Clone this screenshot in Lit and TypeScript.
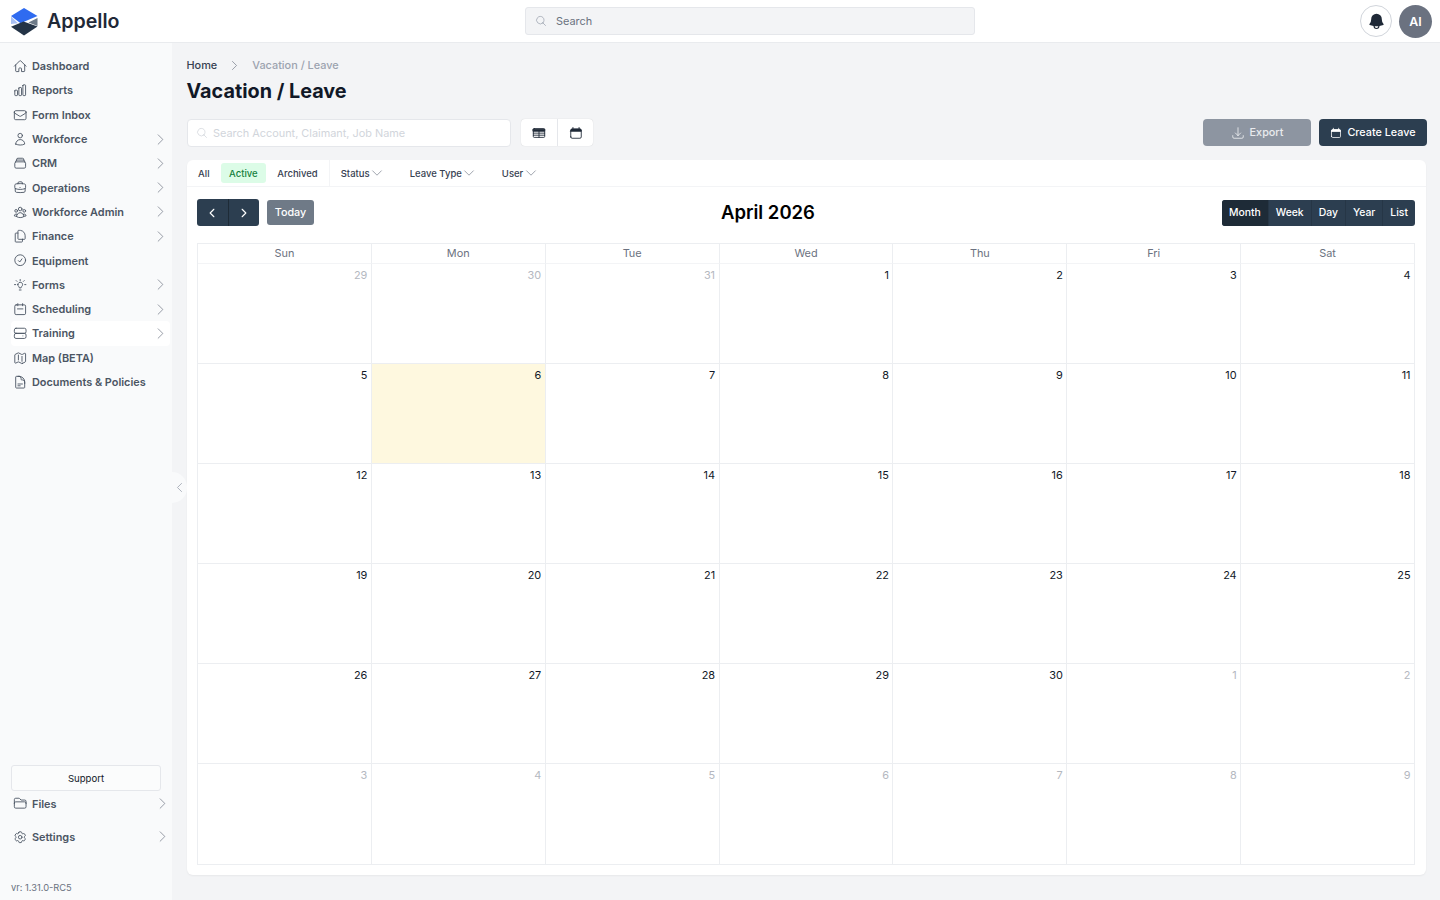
import { LitElement, css, html, svg } from 'lit';
import { customElement } from 'lit/decorators.js';

const icon = (d: unknown, cls = 'ic') => html`<svg class=${cls} viewBox="0 0 24 24" fill="none" stroke="currentColor" stroke-width="1.5" stroke-linecap="round" stroke-linejoin="round">${d}</svg>`;

const chevR = svg`<path d="M8.25 4.5l7.5 7.5-7.5 7.5"/>`;
const chevL = svg`<path d="M15.75 19.5L8.25 12l7.5-7.5"/>`;
const chevD = svg`<path d="M19.5 8.25l-7.5 7.5-7.5-7.5"/>`;
const search = svg`<path d="M21 21l-5.2-5.2m0 0A7.5 7.5 0 1 0 5.2 5.2a7.5 7.5 0 0 0 10.6 10.6z"/>`;
// calendar with a filled head bar, used on the view switch and create button
const calendar = svg`<path d="M6.75 2.5v3M17.25 2.5v3M3 18.75V7.5a2.25 2.25 0 0 1 2.25-2.25h13.5A2.25 2.25 0 0 1 21 7.5v11.25A2.25 2.25 0 0 1 18.75 21H5.25A2.25 2.25 0 0 1 3 18.75z"/><path d="M3 7.5a2.25 2.25 0 0 1 2.25-2.25h13.5A2.25 2.25 0 0 1 21 7.500v1.500H3z" fill="currentColor"/>`;
const table = svg`<path d="M3.750 4.500h16.500a1.500 1.500 0 0 1 1.500 1.500v12a1.500 1.500 0 0 1-1.500 1.500H3.750a1.500 1.500 0 0 1-1.500-1.500V6a1.500 1.500 0 0 1 1.500-1.500z"/><path d="M2.250 5.500h19.500v3.500H2.250z" fill="currentColor"/><path d="M2.250 12.250h19.500M2.250 15.750h19.500M12 9v10.500"/>`;

const navIcons: Record<string, unknown> = {
  home: svg`<path d="M2.25 12l8.95-8.95a1.125 1.125 0 0 1 1.6 0L21.75 12M4.5 9.75v10.125c0 .621.504 1.125 1.125 1.125H9.75v-4.875c0-.621.504-1.125 1.125-1.125h2.25c.621 0 1.125.504 1.125 1.125V21h4.125c.621 0 1.125-.504 1.125-1.125V9.75"/>`,
  chart: svg`<path d="M3 13.125C3 12.504 3.504 12 4.125 12h2.25c.621 0 1.125.504 1.125 1.125v6.75C7.5 20.496 6.996 21 6.375 21h-2.25A1.125 1.125 0 0 1 3 19.875v-6.75zM9.75 8.625c0-.621.504-1.125 1.125-1.125h2.25c.621 0 1.125.504 1.125 1.125v11.25c0 .621-.504 1.125-1.125 1.125h-2.25a1.125 1.125 0 0 1-1.125-1.125V8.625zM16.5 4.125c0-.621.504-1.125 1.125-1.125h2.25C20.496 3 21 3.504 21 4.125v15.75c0 .621-.504 1.125-1.125 1.125h-2.25a1.125 1.125 0 0 1-1.125-1.125V4.125z"/>`,
  mail: svg`<path d="M21.75 6.75v10.5a2.25 2.25 0 0 1-2.25 2.25h-15a2.25 2.25 0 0 1-2.25-2.25V6.75m19.5 0A2.25 2.25 0 0 0 19.5 4.5h-15a2.25 2.25 0 0 0-2.25 2.25m19.5 0v.243a2.25 2.25 0 0 1-1.07 1.916l-7.5 4.615a2.25 2.25 0 0 1-2.36 0L3.32 8.91a2.25 2.25 0 0 1-1.07-1.916V6.75"/>`,
  user: svg`<path d="M15.75 6a3.75 3.75 0 1 1-7.5 0 3.75 3.75 0 0 1 7.5 0zM4.5 20.118a7.5 7.5 0 0 1 15 0A17.93 17.93 0 0 1 12 21.75c-2.676 0-5.216-.584-7.5-1.632z"/>`,
  stack: svg`<path d="M6 6.878V6a2.25 2.25 0 0 1 2.25-2.25h7.5A2.25 2.25 0 0 1 18 6v.878m-12 0c.235-.083.487-.128.75-.128h10.5c.263 0 .515.045.75.128m-12 0A2.25 2.25 0 0 0 4.5 9v.878m13.5-3A2.25 2.25 0 0 1 19.5 9v.878m0 0a2.246 2.246 0 0 0-.75-.128H5.25c-.263 0-.515.045-.75.128m15 0A2.25 2.25 0 0 1 21 12v6a2.25 2.25 0 0 1-2.25 2.25H5.25A2.25 2.25 0 0 1 3 18v-6c0-.98.626-1.813 1.5-2.122"/>`,
  briefcase: svg`<path d="M20.25 14.15v4.25c0 1.094-.787 2.036-1.872 2.18-2.087.277-4.216.42-6.378.42s-4.291-.143-6.378-.42c-1.085-.144-1.872-1.086-1.872-2.18v-4.25m16.5 0a2.18 2.18 0 0 0 .75-1.661V8.706c0-1.081-.768-2.015-1.837-2.175a48.114 48.114 0 0 0-3.413-.387m4.5 8.006c-.194.165-.42.295-.673.38A23.978 23.978 0 0 1 12 15.75c-2.648 0-5.195-.429-7.577-1.22a2.016 2.016 0 0 1-.673-.38m0 0A2.18 2.18 0 0 1 3 12.489V8.706c0-1.081.768-2.015 1.837-2.175a48.111 48.111 0 0 1 3.413-.387m7.5 0V5.25A2.25 2.25 0 0 0 13.5 3h-3a2.25 2.25 0 0 0-2.25 2.25v.894m7.5 0a48.667 48.667 0 0 0-7.5 0M12 12.75h.008v.008H12v-.008z"/>`,
  group: svg`<path d="M18 18.72a9.094 9.094 0 0 0 3.741-.479 3 3 0 0 0-4.682-2.72m.94 3.198l.001.031c0 .225-.012.447-.037.666A11.944 11.944 0 0 1 12 21c-2.17 0-4.207-.576-5.963-1.584A6.062 6.062 0 0 1 6 18.719m12 0a5.971 5.971 0 0 0-.941-3.197m0 0A5.995 5.995 0 0 0 12 12.75a5.995 5.995 0 0 0-5.058 2.772m0 0a3 3 0 0 0-4.681 2.72 8.986 8.986 0 0 0 3.74.477m.94-3.197a5.971 5.971 0 0 0-.94 3.197M15 6.75a3 3 0 1 1-6 0 3 3 0 0 1 6 0zm6 3a2.25 2.25 0 1 1-4.5 0 2.25 2.25 0 0 1 4.5 0zm-13.5 0a2.25 2.25 0 1 1-4.5 0 2.25 2.25 0 0 1 4.5 0z"/>`,
  copy: svg`<path d="M15.75 17.25v3.375c0 .621-.504 1.125-1.125 1.125h-9.75a1.125 1.125 0 0 1-1.125-1.125V7.875c0-.621.504-1.125 1.125-1.125H6.750a9.06 9.06 0 0 1 1.500.124m7.500 10.376h3.375c.621 0 1.125-.504 1.125-1.125V11.250c0-4.460-3.243-8.161-7.500-8.876a9.06 9.06 0 0 0-1.500-.124H9.375c-.621 0-1.125.504-1.125 1.125v12.750c0 .621.504 1.125 1.125 1.125h6.375z"/>`,
  check: svg`<path d="M9 12.75L11.25 15 15 9.75M21 12a9 9 0 1 1-18 0 9 9 0 0 1 18 0z"/>`,
  bulb: svg`<path d="M12 2.500v2M4.500 11H2.500m19 0h-2M6.700 5.700L5.300 4.300m12 1.400l1.400-1.400M8 11a4 4 0 1 1 6.500 3.100c-.700.600-1 1.300-1 2.400h-3c0-1.100-.300-1.800-1-2.400A4 4 0 0 1 8 11zM10.500 20h3"/>`,
  sched: svg`<path d="M8 2.750v3.500M16 2.750v3.500M5.25 4.750h13.5A2.25 2.25 0 0 1 21 7v11.75A2.25 2.25 0 0 1 18.75 21H5.25A2.25 2.25 0 0 1 3 18.75V7a2.25 2.25 0 0 1 2.25-2.25zM7.5 11.5h9"/>`,
  tray: svg`<path d="M5 3.75h14A2.75 2.75 0 0 1 21.75 6.5v3A2.75 2.75 0 0 1 19 12.25H5A2.75 2.75 0 0 1 2.25 9.5v-3A2.75 2.75 0 0 1 5 3.75zM5 12.25h14a2.75 2.75 0 0 1 2.75 2.75v3A2.75 2.75 0 0 1 19 20.75H5A2.75 2.75 0 0 1 2.25 18v-3A2.75 2.75 0 0 1 5 12.25zM16.5 16.5h.01"/>`,
  map: svg`<path d="M9 6.75V15m6-6v8.25m.503 3.498l4.875-2.437c.381-.19.622-.58.622-1.006V4.82c0-.836-.88-1.38-1.628-1.006l-3.869 1.934c-.317.159-.69.159-1.006 0L9.503 3.252a1.125 1.125 0 0 0-1.006 0L3.622 5.689C3.24 5.88 3 6.27 3 6.695V19.18c0 .836.88 1.38 1.628 1.006l3.869-1.934c.317-.159.69-.159 1.006 0l4.994 2.497c.317.158.69.158 1.006 0z"/>`,
  doc: svg`<path d="M19.5 14.25v-2.625a3.375 3.375 0 0 0-3.375-3.375h-1.5A1.125 1.125 0 0 1 13.5 7.125v-1.5a3.375 3.375 0 0 0-3.375-3.375H8.25m0 12.75h7.5m-7.5 3H12M10.5 2.25H5.625c-.621 0-1.125.504-1.125 1.125v17.25c0 .621.504 1.125 1.125 1.125h12.75c.621 0 1.125-.504 1.125-1.125V11.25a9 9 0 0 0-9-9z"/>`,
  folder: svg`<path d="M2.25 12.75V12A2.25 2.25 0 0 1 4.5 9.75h15A2.25 2.25 0 0 1 21.75 12v.75m-8.69-6.44l-2.12-2.12a1.5 1.5 0 0 0-1.061-.44H4.5A2.25 2.25 0 0 0 2.25 6v12a2.25 2.25 0 0 0 2.25 2.25h15A2.25 2.25 0 0 0 21.75 18V9a2.25 2.25 0 0 0-2.25-2.25h-5.379a1.5 1.5 0 0 1-1.06-.44z"/>`,
  gear: svg`<path d="M9.594 3.94c.09-.542.56-.94 1.11-.94h2.593c.55 0 1.02.398 1.11.94l.213 1.281c.063.374.313.686.645.87.074.04.147.083.22.127.324.196.72.257 1.075.124l1.217-.456a1.125 1.125 0 0 1 1.37.49l1.296 2.247a1.125 1.125 0 0 1-.26 1.431l-1.003.827c-.293.24-.438.613-.431.992a6.759 6.759 0 0 1 0 .255c-.007.378.138.75.43.99l1.005.828c.424.35.534.954.26 1.43l-1.298 2.247a1.125 1.125 0 0 1-1.369.491l-1.217-.456c-.355-.133-.75-.072-1.076.124a6.57 6.57 0 0 1-.22.128c-.331.183-.581.495-.644.869l-.213 1.28c-.09.543-.56.941-1.11.941h-2.594c-.55 0-1.02-.398-1.11-.94l-.213-1.281c-.062-.374-.312-.686-.644-.87a6.52 6.52 0 0 1-.22-.127c-.325-.196-.72-.257-1.076-.124l-1.217.456a1.125 1.125 0 0 1-1.369-.49l-1.297-2.247a1.125 1.125 0 0 1 .26-1.431l1.004-.827c.292-.24.437-.613.43-.992a6.932 6.932 0 0 1 0-.255c.007-.378-.138-.75-.43-.99l-1.004-.828a1.125 1.125 0 0 1-.26-1.43l1.297-2.247a1.125 1.125 0 0 1 1.37-.491l1.216.456c.356.133.751.072 1.076-.124.072-.044.146-.087.22-.128.332-.183.582-.495.644-.869l.214-1.281zM15 12a3 3 0 1 1-6 0 3 3 0 0 1 6 0z"/>`,
};

const navItems = [
  { label: 'Dashboard', icon: 'home' },
  { label: 'Reports', icon: 'chart' },
  { label: 'Form Inbox', icon: 'mail' },
  { label: 'Workforce', icon: 'user', more: true },
  { label: 'CRM', icon: 'stack', more: true },
  { label: 'Operations', icon: 'briefcase', more: true },
  { label: 'Workforce Admin', icon: 'group', more: true },
  { label: 'Finance', icon: 'copy', more: true },
  { label: 'Equipment', icon: 'check' },
  { label: 'Forms', icon: 'bulb', more: true },
  { label: 'Scheduling', icon: 'sched', more: true },
  { label: 'Training', icon: 'tray', more: true, active: true },
  { label: 'Map (BETA)', icon: 'map' },
  { label: 'Documents & Policies', icon: 'doc' },
];

// april 2026 grid, six weeks from sunday 29 march
const days: { n: number; off?: boolean; now?: boolean }[] = [
  { n: 29, off: true }, { n: 30, off: true }, { n: 31, off: true },
  ...Array.from({ length: 30 }, (_, i) => ({ n: i + 1, now: i + 1 === 6 })),
  ...Array.from({ length: 9 }, (_, i) => ({ n: i + 1, off: true })),
];

@customElement('app-root')
export class AppRoot extends LitElement {
  static styles = css`
    :host {
      display: grid;
      grid-template-columns: 172px 1fr;
      grid-template-rows: 43px 1fr;
      height: 100vh;
      overflow: hidden;
      background: #f3f4f6;
      font-family: Inter, "Liberation Sans", sans-serif;
      color: #111827;
    }
    svg { display: block; flex: none; }
    .ic { width: 14.4px; height: 14.4px; }

    header {
      grid-column: 1 / 3;
      display: grid;
      grid-template-columns: 515px 450px 1fr;
      align-items: center;
      background: #fff;
      border-bottom: 1px solid #e9ebee;
      box-sizing: border-box;
      padding: 0 8px 0 10px;
    }
    .brand { display: flex; align-items: center; gap: 9px; font-size: 19.6px; font-weight: 600; color: #1f2937; }
    .top-search {
      display: flex;
      align-items: center;
      gap: 9px;
      height: 28px;
      box-sizing: border-box;
      padding: 0 9px;
      background: #f3f4f6;
      border: 1px solid #e5e7eb;
      border-radius: 3px;
      font-size: 10.9px;
      color: #6b7280;
    }
    .top-search .ic { width: 12px; height: 12px; color: #9ca3af; }
    .top-right { display: flex; justify-content: flex-end; align-items: center; gap: 7px; }
    .bell {
      width: 32px;
      height: 32px;
      box-sizing: border-box;
      border: 1px solid #d1d5db;
      border-radius: 50%;
      display: grid;
      place-items: center;
      color: #1f2937;
    }
    .avatar {
      width: 33px;
      height: 33px;
      margin-top: 1px;
      border-radius: 50%;
      background: #6b7280;
      color: #fff;
      display: grid;
      place-items: center;
      font-size: 12.4px;
      font-weight: 600;
    }

    aside {
      display: flex;
      flex-direction: column;
      background: #f9fafb;
      padding: 11px 2px 0 11px;
      min-height: 0;
    }
    .item {
      display: flex;
      align-items: center;
      height: 24.3px;
      flex: none;
      padding: 0 2px 0 2px;
      gap: 4.6px;
      border-radius: 4px;
      font-size: 10.9px;
      font-weight: 600;
      color: #4b5563;
    }
    .item.active { background: #fff; }
    .item span { flex: 1; }
    .item .chev { width: 15px; height: 15px; color: #6b7280; stroke-width: 1.1; }
    .support {
      margin: auto 9px 0 0;
      height: 26px;
      flex: none;
      box-sizing: border-box;
      border: 1.5px solid #e5e7eb;
      border-radius: 3px;
      background: #fbfcfc;
      display: grid;
      place-items: center;
      font-size: 9.6px;
      font-weight: 400;
      color: #111827;
    }
    .foot { padding-right: 0; }
    .settings { margin-top: 9px; }
    .version { margin: 33px 0 7px; font-size: 9.3px; line-height: 11px; color: #6b7280; }

    .collapse {
      position: absolute;
      left: 172px;
      top: 472px;
      width: 15px;
      height: 31px;
      background: #f9fafb;
      border-radius: 0 15px 15px 0;
      display: grid;
      place-items: center;
      color: #9ca3af;
    }
    .collapse .ic { width: 13px; height: 13px; }

    main { padding: 15px 14px 25px 15px; min-width: 0; min-height: 0; display: flex; flex-direction: column; }
    .crumbs { display: flex; align-items: center; gap: 11px; font-size: 10.9px; font-weight: 500; color: #374151; height: 14px; margin-left: -0.5px; }
    .crumbs .ic { width: 13px; height: 13px; color: #6b7280; stroke-width: 1.2; }
    .crumbs .cur { color: #9ca3af; }
    h1 { margin: 4px 0 0 -0.5px; font-size: 19.8px; line-height: 30px; font-weight: 700; color: #111827; }

    .actions { display: flex; align-items: flex-start; margin: 13px -1px 0 0; height: 28px; }
    .find {
      width: 324px;
      height: 28px;
      box-sizing: border-box;
      display: flex;
      align-items: center;
      gap: 5px;
      padding: 0 8px;
      background: #fff;
      border: 1px solid #e5e7eb;
      border-radius: 4px;
      font-size: 10.9px;
      color: #d1d5db;
    }
    .find .ic { width: 12px; height: 12px; }
    .views { display: flex; margin-left: 10px; height: 27px; background: #fff; border-radius: 4px; box-shadow: 0 0 1px rgba(0,0,0,.2); }
    .views div { width: 36px; box-sizing: border-box; display: grid; place-items: center; color: #1f2937; }
    .views div + div { border-left: 1px solid #e5e7eb; }
    .views .ic { width: 14px; height: 14px; }
    .btn {
      height: 27px;
      box-sizing: border-box;
      display: flex;
      align-items: center;
      justify-content: center;
      gap: 5px;
      border-radius: 4px;
      color: #fff;
      font-size: 10.8px;
      font-weight: 500;
    }
    .btn .ic { width: 12px; height: 12px; }
    .export { width: 108px; margin-left: auto; background: #8d95a1; color: #e9ebee; }
    .export .ic { width: 14px; height: 14px; }
    .create { width: 108px; margin-left: 8px; background: #2c3e50; }

    .card {
      margin-top: 13px;
      flex: 1;
      min-height: 0;
      background: #fff;
      border-radius: 6px;
      box-shadow: 0 1px 2px rgba(0,0,0,.05);
      display: flex;
      flex-direction: column;
    }
    .filters { display: flex; align-items: center; height: 27px; flex: none; border-bottom: 1px solid #f3f4f6; box-sizing: border-box; font-size: 9.5px; color: #374151; font-weight: 500; }
    .tabs { display: flex; align-items: center; height: 100%; padding: 0 3.5px 0 3px; gap: 3.5px; border-right: 1px solid #f3f4f6; }
    .tab { padding: 0 8px; height: 20px; line-height: 21px; border-radius: 3px; }
    .tab.on { background: #dcfce7; color: #15803d; }
    .drop { display: flex; align-items: center; gap: 0.5px; margin-left: 25.5px; }
    .tabs + .drop { margin-left: 10.5px; }
    .drop .ic { width: 14px; height: 14px; color: #6b7280; stroke-width: 1.1; }

    .cal { flex: 1; padding: 12px 11px 10px 10px; min-height: 0; display: flex; flex-direction: column; }
    .bar { display: flex; justify-content: space-between; align-items: center; height: 27px; }
    .bar-left { display: flex; gap: 8px; align-items: center; }
    .pager { display: flex; height: 27px; width: 62px; background: #2c3e50; border-radius: 3px; color: #fff; }
    .pager div { flex: 1; display: grid; place-items: center; }
    .pager div + div { border-left: 1px solid #1e2b37; }
    .pager .ic { stroke-width: 2.2; width: 12px; height: 12px; }
    .today-btn { height: 25px; width: 47px; display: grid; place-items: center; background: #6f7a87; color: #fff; border-radius: 3px; font-size: 10.8px; font-weight: 500; }
    h2 { margin: -1px 0 1px; font-size: 18.5px; font-weight: 600; color: #000; }
    .modes { display: flex; height: 26px; background: #2c3e50; border-radius: 3px; overflow: hidden; color: #fff; font-size: 10.4px; font-weight: 500; }
    .modes div { display: grid; place-items: center; padding: 0 7px; border-left: 1px solid #263646; }
    .modes div:first-child { background: #1e2b37; border-left: 0; }

    .grid {
      margin-top: 17px;
      flex: 1;
      min-height: 0;
      display: grid;
      grid-template-columns: repeat(7, 1fr);
      grid-template-rows: 20px repeat(6, 1fr);
      border: 1px solid #eceef1;
      border-width: 1px 0 1px 1px;
      box-sizing: border-box;
    }
    .head, .day { border-right: 1px solid #eceef1; box-sizing: border-box; }
    .head { display: grid; place-items: center; padding-bottom: 1px; font-size: 10.9px; color: #6b7280; border-bottom: 1px solid #f3f4f6; }
    .day { border-bottom: 1px solid #eceef1; padding: 4px 3.5px; text-align: right; font-size: 10.9px; line-height: 14px; color: #111827; }
    .day:nth-last-child(-n + 7) { border-bottom: 0; }
    .day.off { color: #b4b8bf; }
    .day.now { background: #fef8df; }
  `;

  render() {
    return html`
      <header>
        <div class="brand">
          <svg width="28" height="31" viewBox="10 5 28 31">
            <path d="M24 7L37.500 15 20.500 22.200 11 15z" fill="#2f6bf0"/>
            <path d="M11 15.500V23L18 22.300z" fill="#a9c1f5"/>
            <path d="M23.500 20.500L37.500 25.500 24 34.500 11 25.800z" fill="#243447"/>
            <path d="M37.500 17V25L28.500 21.400z" fill="#6d7a88"/>
          </svg>
          Appello
        </div>
        <div class="top-search">${icon(search)}Search</div>
        <div class="top-right">
          <div class="bell">
            <svg width="19" height="19" viewBox="0 0 24 24" fill="currentColor"><path d="M12 2.250A6.750 6.750 0 0 0 5.250 9v.750a8.200 8.200 0 0 1-2.100 5.500.750.750 0 0 0 .300 1.200c1.500.550 3.100.950 4.750 1.200a3.750 3.750 0 1 0 7.600 0c1.650-.250 3.250-.650 4.750-1.200a.750.750 0 0 0 .300-1.200 8.200 8.200 0 0 1-2.100-5.500V9A6.750 6.750 0 0 0 12 2.250zM12 20.250a2.250 2.250 0 0 1-2.250-2.200 28 28 0 0 0 4.500 0A2.250 2.250 0 0 1 12 20.250z"/></svg>
          </div>
          <div class="avatar">AI</div>
        </div>
      </header>

      <aside>
        ${navItems.map(n => html`
          <div class="item ${n.active ? 'active' : ''}">
            ${icon(navIcons[n.icon])}
            <span>${n.label}</span>
            ${n.more ? icon(chevR, 'ic chev') : ''}
          </div>
        `)}
        <div class="support">Support</div>
        <div class="item foot">${icon(navIcons.folder)}<span>Files</span>${icon(chevR, 'ic chev')}</div>
        <div class="item foot settings">${icon(navIcons.gear)}<span>Settings</span>${icon(chevR, 'ic chev')}</div>
        <div class="version">vr: 1.31.0-RC5</div>
      </aside>
      <div class="collapse">${icon(chevL)}</div>

      <main>
        <div class="crumbs"><span>Home</span>${icon(chevR)}<span class="cur">Vacation / Leave</span></div>
        <h1>Vacation / Leave</h1>

        <div class="actions">
          <div class="find">${icon(search)}Search Account, Claimant, Job Name</div>
          <div class="views">
            <div>${icon(table)}</div>
            <div>${icon(calendar)}</div>
          </div>
          <div class="btn export">
            ${icon(svg`<path d="M3 16.500v2.250A2.250 2.250 0 0 0 5.250 21h13.500A2.250 2.250 0 0 0 21 18.750V16.500M16.500 12L12 16.500m0 0L7.500 12m4.500 4.500V3"/>`)}Export
          </div>
          <div class="btn create">${icon(calendar)}Create Leave</div>
        </div>

        <section class="card">
          <div class="filters">
            <div class="tabs">
              <div class="tab">All</div>
              <div class="tab on">Active</div>
              <div class="tab">Archived</div>
            </div>
            <div class="drop">Status${icon(chevD)}</div>
            <div class="drop">Leave Type${icon(chevD)}</div>
            <div class="drop">User${icon(chevD)}</div>
          </div>
          <div class="cal">
            <div class="bar">
              <div class="bar-left">
                <div class="pager"><div>${icon(chevL)}</div><div>${icon(chevR)}</div></div>
                <div class="today-btn">Today</div>
              </div>
              <h2>April 2026</h2>
              <div class="modes"><div>Month</div><div>Week</div><div>Day</div><div>Year</div><div>List</div></div>
            </div>
            <div class="grid">
              ${['Sun', 'Mon', 'Tue', 'Wed', 'Thu', 'Fri', 'Sat'].map(d => html`<div class="head">${d}</div>`)}
              ${days.map(d => html`<div class="day ${d.off ? 'off' : ''} ${d.now ? 'now' : ''}">${d.n}</div>`)}
            </div>
          </div>
        </section>
      </main>
    `;
  }
}
